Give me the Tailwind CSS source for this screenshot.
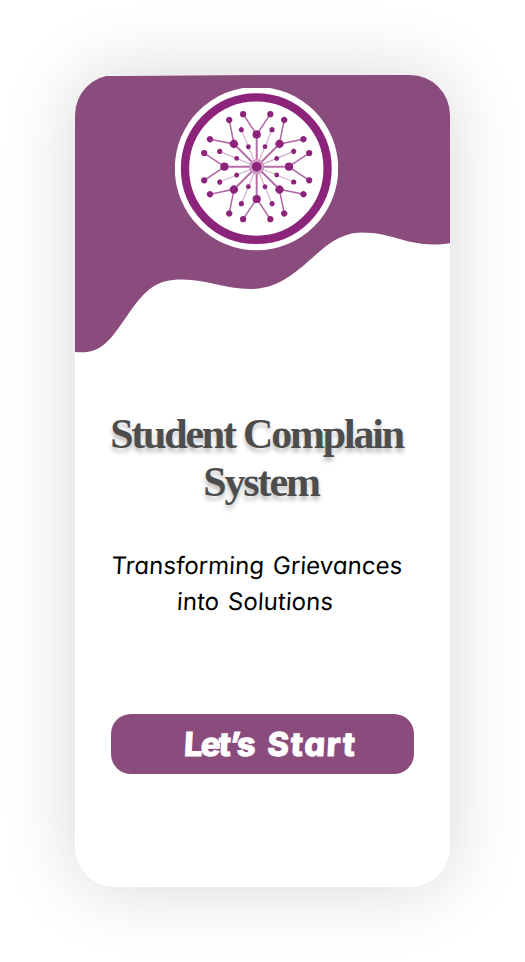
<!DOCTYPE html>
<html lang="en">
<head>
<meta charset="utf-8">
<title>Student Complain System</title>
<script src="https://cdn.jsdelivr.net/npm/@tailwindcss/browser@4"></script>
</head>
<body class="bg-white overflow-hidden">
<div class="p-[75px]">
  <main class="relative flex h-[812px] w-[375px] flex-col overflow-hidden rounded-[40px] bg-white">
    <svg class="absolute left-0 top-0" width="375" height="290" viewBox="0 0 375 290" fill="none">
      <path fill="#8A4C7D" d="M0 1H34L185 0H375V168.200C335 174 320 157.500 287 157.500C243 157.500 227 214 175 214C150 214 132 204.500 107 204.500C82 204.500 71 213 52 241C33 269 24 279.500 0 277Z"/>
    </svg>
    <svg class="relative ml-[100px] mt-[13px] shrink-0" width="163" height="163" viewBox="-81.700 -78.700 163 163">
      <defs>
        <g id="arm" stroke="#8D247C" fill="#8D247C">
          <path stroke-width="2" stroke-opacity=".65" d="M0 0V-32"/>
          <path stroke-width="1.500" stroke-opacity=".7" d="M-13.600 -52.500L0 -32L13.600 -52.500" fill="none"/>
          <path stroke-width="1.200" stroke-opacity=".35" d="M0 0L8.300 -20L15.300 -37"/>
          <g stroke="none">
            <circle cy="-32.300" r="4.100"/>
            <circle cx="-13.600" cy="-52.500" r="3.100"/>
            <circle cx="13.600" cy="-52.500" r="3.100"/>
            <circle cx="8.300" cy="-20" r="2.400"/>
            <circle cx="15.300" cy="-37" r="2.600"/>
          </g>
        </g>
      </defs>
      <circle cx="-.2" cy="1.900" r="81.700" fill="#fff"/>
      <circle cx="-.4" cy="1.900" r="71.300" fill="none" stroke="#8D247C" stroke-width="8.300"/>
      <use href="#arm"/>
      <use href="#arm" transform="rotate(45)"/>
      <use href="#arm" transform="rotate(90)"/>
      <use href="#arm" transform="rotate(135)"/>
      <use href="#arm" transform="rotate(180)"/>
      <use href="#arm" transform="rotate(225)"/>
      <use href="#arm" transform="rotate(270)"/>
      <use href="#arm" transform="rotate(315)"/>
      <circle r="7.500" fill="#C48CBB"/>
      <circle r="6" fill="none" stroke="#DDBBD8" stroke-width=".8"/>
      <circle r="4.800" fill="#8D247C"/>
    </svg>
    <h1 class="mt-[159px] w-[363px] whitespace-nowrap text-center font-['Liberation_Serif',serif] text-[42px] font-bold leading-[48px] tracking-[-2.2px] text-[#4d4d4d] [text-shadow:0_4px_4px_rgba(0,0,0,0.25)]">Student Complain<br><span class="pl-[9px] tracking-[-2.1px]">System</span></h1>
    <p class="mt-[42px] w-[362px] -skew-x-3 whitespace-nowrap text-center font-['Inter',sans-serif] text-[24px] leading-[36px] tracking-[0.05px] text-black [font-feature-settings:'cv11'] [word-spacing:2px]">Transforming Grievances<br>into Solutions</p>
    <button class="ml-[36px] mt-[94px] flex h-[60px] w-[303px] items-center justify-center rounded-[20px] bg-[#8A4C7D] pl-[16px] pt-[2px] font-['Inter',sans-serif] text-[33px] font-extrabold text-white [font-feature-settings:'cv11']"><span class="-skew-x-3 whitespace-nowrap [-webkit-text-stroke:0.8px_white]"><span class="tracking-[-1.9px]">Let’s</span><span class="tracking-[1.4px] [word-spacing:5px]"> Start</span></span></button>
  </main>
</div>
<div class="pointer-events-none absolute left-[75px] top-[75px] h-[812px] w-[375px] rounded-[40px] shadow-[0_0_75px_rgba(0,0,0,0.16)]"></div>
</body>
</html>
